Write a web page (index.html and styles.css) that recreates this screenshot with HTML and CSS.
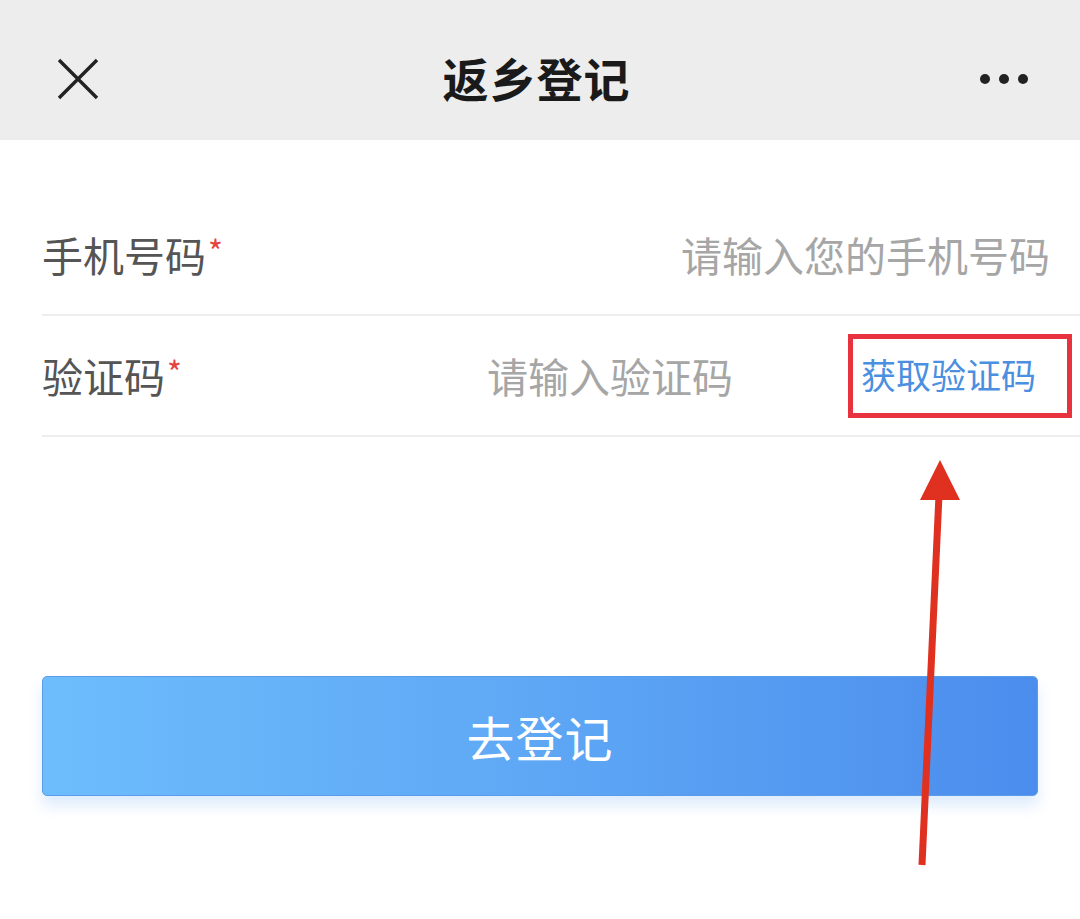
FILE: index.html
```html
<!DOCTYPE html>
<html lang="zh">
<head>
<meta charset="utf-8">
<link rel="stylesheet" href="styles.css">
</head>
<body>
<div class="page">
  <header class="nav">
    <div class="nav-left">
      <svg class="close" viewBox="0 0 42 42" width="42" height="42"><path d="M2 2 L40 40 M40 2 L2 40" stroke="#222" stroke-width="3.4" fill="none"/></svg>
    </div>
    <h1 class="title">返乡登记</h1>
    <div class="nav-right">
      <div class="more"><span></span><span></span><span></span></div>
    </div>
  </header>
  <main class="form">
    <div class="row">
      <label class="label">手机号码<i>*</i></label>
      <span class="input">请输入您的手机号码</span>
    </div>
    <div class="row row-code">
      <label class="label">验证码<i>*</i></label>
      <span class="input input-code">请输入验证码</span>
      <span class="get-code">获取验证码</span>
    </div>
    <div class="btn-wrap">
      <button class="submit">去登记</button>
    </div>
  </main>
  <svg class="arrow" width="80" height="440" viewBox="0 0 80 440">
    <line x1="25" y1="410" x2="42" y2="40" stroke="#e0301f" stroke-width="7"/>
    <polygon points="43,5 23,45 63,45" fill="#e0301f"/>
  </svg>
</div>
</body>
</html>
```
FILE: styles.css
```css
* { box-sizing: border-box; margin: 0; padding: 0; }
html, body { width: 1080px; height: 919px; background: #fff; overflow: hidden; }
body { font-family: "Noto Sans CJK SC", "Noto Sans", sans-serif; }
.page { position: relative; width: 1080px; height: 919px; }
.nav {
  height: 140px; background: #ededed;
  display: grid; grid-template-columns: 1fr auto 1fr; align-items: center;
  padding: 0 52px 0 57px;
}
.nav-left { display: flex; align-items: center; padding-top: 18px; }
.nav-right { display: flex; justify-content: flex-end; padding-top: 18px; }
.close { display: block; }
.title {
  font-size: 46px; font-weight: 700; color: #1a1a1a;
  letter-spacing: 1px; margin-left: -12px; padding-top: 14px;
}
.more { display: flex; gap: 9px; }
.more span { width: 10px; height: 10px; border-radius: 50%; background: #222; }
.form { padding-top: 55px; }
.row {
  height: 121px; margin-left: 42px;
  border-bottom: 2px solid #eeeeee;
  display: flex; align-items: center;
  padding-right: 30px;
}
.label { font-size: 41px; color: #555; margin-top: -2px; }
.label i { font-style: normal; color: #e64340; font-size: 32px; vertical-align: 8px; margin-left: 2px; }
.input { flex: 1; text-align: right; font-size: 41px; color: #a6a6a6; margin-top: -2px; }
.row-code { padding-right: 8px; }
.input-code { padding-right: 115px; }
.get-code {
  font-size: 35px; color: #4b8fe0;
  border: 5px solid #e8323e;
  padding: 14px 31px 18px 8px;
  line-height: 1.2;
}
.btn-wrap { padding: 239px 42px 0 42px; }
.submit {
  width: 996px; height: 120px; border-radius: 5px;
  background: linear-gradient(90deg, #6dbdfc 0%, #5ea7f5 50%, #4b8ded 100%);
  color: #fff; font-family: inherit; font-size: 48px; letter-spacing: 1px;
  box-shadow: 0 10px 14px rgba(160, 200, 245, 0.35);
  border: 1px solid #5a9ce8;
}
.arrow { position: absolute; left: 897px; top: 455px; }
```
